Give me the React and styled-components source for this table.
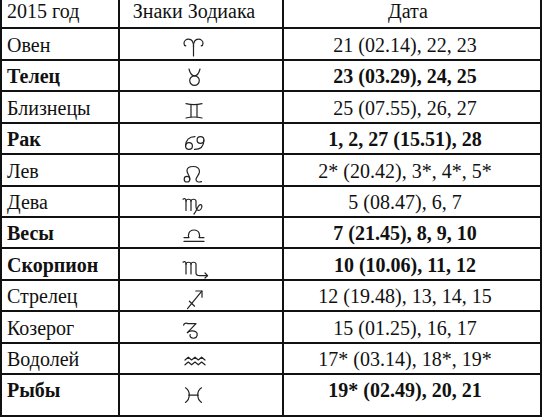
import React from 'react';
import styled, { createGlobalStyle } from 'styled-components';

const GlobalStyle = createGlobalStyle`
  html, body {
    margin: 0;
    padding: 0;
    background: #fff;
  }
  body {
    font-family: "Liberation Serif", "Times New Roman", serif;
    color: #111;
  }
  *, *::before, *::after {
    box-sizing: border-box;
  }
`;

const Sheet = styled.div`
  width: 542px;
  display: flex;
  flex-direction: column;
  font-family: "Liberation Serif", "Times New Roman", serif;
  font-size: 20px;
  color: #111;
`;

const Row = styled.div`
  display: grid;
  grid-template-columns: 120px 164px 258px;
  height: ${(p) => p.$height}px;
`;

const Cell = styled.div`
  line-height: 23px;
  text-align: ${(p) => p.$align || 'center'};
  padding: ${(p) => (p.$head ? 0 : 5)}px ${(p) => p.$padRight || 0}px 0 ${(p) => p.$padLeft || 0}px;
  border-right: 2px solid #111;
  border-bottom: 2px solid #111;
  border-left: ${(p) => (p.$first ? '2px solid #111' : 'none')};
  white-space: nowrap;
`;

const Text = styled.span`
  font-family: "Liberation Serif", "Times New Roman", serif;
  font-size: 20px;
  font-weight: ${(p) => (p.$bold ? 700 : 400)};
`;

const SignCell = styled.div`
  padding: 8px 14px 0 0;
  border-right: 2px solid #111;
  border-bottom: 2px solid #111;
`;

const SignIcon = styled.svg`
  display: block;
  margin: 0 auto;
  width: 30px;
  height: 22px;
  fill: none;
  stroke: #222;
  stroke-width: 1.2;
  stroke-linecap: round;
  stroke-linejoin: round;
  overflow: visible;
`;

// zodiac glyphs drawn in a 30x22 box
const signPaths = {
  aries: (
    <>
      <path d="M14.5 19 V9" />
      <path d="M14.5 9.5 C14.5 5 12.5 2.2 9.6 2.2 C7 2.2 5 4 5 6.4 C5 7.8 5.8 8.6 6.8 8.8" />
      <path d="M14.5 9.5 C14.5 5 16.5 2.2 19.4 2.2 C22 2.2 24 4 24 6.4 C24 7.8 23.2 8.6 22.2 8.8" />
    </>
  ),
  taurus: (
    <>
      <circle cx="15.5" cy="12.6" r="4.8" />
      <path d="M10 1 C11 5 13 7.8 15.5 7.8 C18 7.8 20 5 21 1" />
    </>
  ),
  gemini: (
    <>
      <path d="M7 3.6 Q15 5.6 23 3.6" />
      <path d="M7 18 Q15 16 23 18" />
      <path d="M12 4.7 V16.8" />
      <path d="M18 4.7 V16.8" />
    </>
  ),
  cancer: (
    <>
      <circle cx="10" cy="15" r="3.4" />
      <path d="M6.6 15 C6.6 9 10 5.6 16 5.6" />
      <circle cx="21.5" cy="9" r="3.4" />
      <path d="M24.9 9 C24.9 15 21.5 18.4 15.5 18.4" />
    </>
  ),
  leo: (
    <>
      <circle cx="8" cy="16.2" r="2.8" />
      <path d="M10.8 16.2 C10.8 12.5 8 10.5 8 7.8 C8 5 10.5 3.5 14 3.5 C18 3.5 20.5 5.5 20.5 8.6 C20.5 12 17 14 17 16.6 C17 18.6 19.5 19.6 22.5 18.6" />
    </>
  ),
  virgo: (
    <>
      <path d="M4 5.2 C5.5 4 7 4.6 7 6.6 V16.5" />
      <path d="M7 7.2 C7 4.6 12 4.6 12 7.2 V16.5" />
      <path d="M12 7.2 C12 4.6 17 4.6 17 7.2 V13 C17 16.5 20 17.5 22 15 C24 12.5 22.5 9.5 20.5 11 C18.5 12.5 17.5 17 15 20" />
    </>
  ),
  libra: (
    <>
      <path d="M5 12.6 H10 C9 11 9 5 15 5 C21 5 21 11 20 12.6 H25" />
      <path d="M5 16.4 H25" />
    </>
  ),
  scorpio: (
    <>
      <path d="M4 5.2 C5.5 4 7 4.6 7 6.6 V17" />
      <path d="M7 7.2 C7 4.6 12 4.6 12 7.2 V17" />
      <path d="M12 7.2 C12 4.6 17 4.6 17 7.2 V16 C17 18 18.5 18.6 21 18.6 H28.5" />
      <path d="M26 16 L28.6 18.6 L26 21" />
    </>
  ),
  sagittarius: (
    <>
      <path d="M8.5 20.6 L22.8 3.2" />
      <path d="M16.8 3 H23 V9.2" />
      <path d="M10.4 13.2 L15.6 18.2" />
    </>
  ),
  capricorn: (
    <>
      <path d="M4.6 5.2 C5 3.2 7 2.8 9 3.6 H17 L8.4 12.6" />
      <path d="M8.4 12.6 C10.4 10.6 14.4 10.2 16.8 11.8 C19.2 13.4 18.6 17.8 15.2 18.2 C12.2 18.6 10.2 16.6 11.2 14.6" />
    </>
  ),
  aquarius: (
    <>
      <path d="M6 9 L9.3 6.2 L12.6 9 L16 6.2 L19.3 9 L22.6 6.2 L26 9" />
      <path d="M6 13.8 L9.3 11 L12.6 13.8 L16 11 L19.3 13.8 L22.6 11 L26 13.8" />
    </>
  ),
  pisces: (
    <>
      <path d="M6.5 5.8 C11.5 9 11.5 17 6.5 20.4" />
      <path d="M22.5 5.8 C17.5 9 17.5 17 22.5 20.4" />
      <path d="M9.8 13.2 H19.2" />
    </>
  ),
};

const rows = [
  { name: 'Овен', sign: 'aries', date: '21 (02.14), 22, 23' },
  { name: 'Телец', sign: 'taurus', date: '23 (03.29), 24, 25', bold: true },
  { name: 'Близнецы', sign: 'gemini', date: '25 (07.55), 26, 27' },
  { name: 'Рак', sign: 'cancer', date: '1, 2, 27 (15.51), 28', bold: true },
  { name: 'Лев', sign: 'leo', date: '2* (20.42), 3*, 4*, 5*' },
  { name: 'Дева', sign: 'virgo', date: '5 (08.47), 6, 7' },
  { name: 'Весы', sign: 'libra', date: '7 (21.45), 8, 9, 10', bold: true },
  { name: 'Скорпион', sign: 'scorpio', date: '10 (10.06), 11, 12', bold: true },
  { name: 'Стрелец', sign: 'sagittarius', date: '12 (19.48), 13, 14, 15' },
  { name: 'Козерог', sign: 'capricorn', date: '15 (01.25), 16, 17' },
  { name: 'Водолей', sign: 'aquarius', date: '17* (03.14), 18*, 19*' },
  { name: 'Рыбы', sign: 'pisces', date: '19* (02.49), 20, 21', bold: true },
];

export default function App() {
  return (
    <>
      <GlobalStyle />
      <Sheet>
        <Row $height={29}>
          <Cell $head $first $align="left" $padLeft={5}><Text>2015 год</Text></Cell>
          <Cell $head $padRight={14}><Text>Знаки Зодиака</Text></Cell>
          <Cell $head $padRight={8}><Text>Дата</Text></Cell>
        </Row>
        {rows.map((r, i) => (
          <Row key={r.name} $height={i === rows.length - 1 ? 43 : 31.4}>
            <Cell $first $align="left" $padLeft={5}>
              <Text $bold={r.bold}>{r.name}</Text>
            </Cell>
            <SignCell>
              <SignIcon viewBox="0 0 30 22">{signPaths[r.sign]}</SignIcon>
            </SignCell>
            <Cell $padRight={14}>
              <Text $bold={r.bold}>{r.date}</Text>
            </Cell>
          </Row>
        ))}
      </Sheet>
    </>
  );
}
